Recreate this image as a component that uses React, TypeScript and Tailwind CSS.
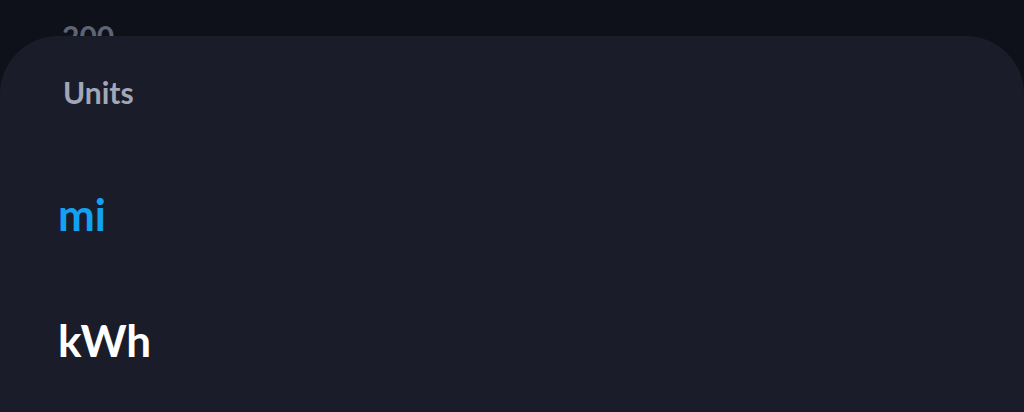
import React from 'react'

export default function App() {
  const units = [
    { label: 'mi', active: true },
    { label: 'kWh', active: false },
  ]

  return (
    <main className="relative h-[412px] w-full overflow-hidden bg-[#0e111a] font-['Lato',sans-serif]">
      {/* page behind the sheet */}
      <div className="pl-[62px] pt-[21px] text-[30px] font-bold leading-none text-[#5f6474]">200</div>

      {/* bottom sheet */}
      <section className="absolute inset-x-0 top-[36px] bottom-0 rounded-t-[58px] bg-[#1a1d29]">
        <h2 className="pl-[63px] pt-[41px] text-[30px] font-bold leading-none text-[#a2a7b8]">Units</h2>
        <ul className="mt-[85px] flex flex-col gap-[82px] pl-[58px]">
          {units.map(u => (
            <li
              key={u.label}
              className={
                'text-[44px] font-bold leading-none ' + (u.active ? 'text-[#13a2f2]' : 'text-white')
              }
            >
              {u.label}
            </li>
          ))}
        </ul>
      </section>
    </main>
  )
}
